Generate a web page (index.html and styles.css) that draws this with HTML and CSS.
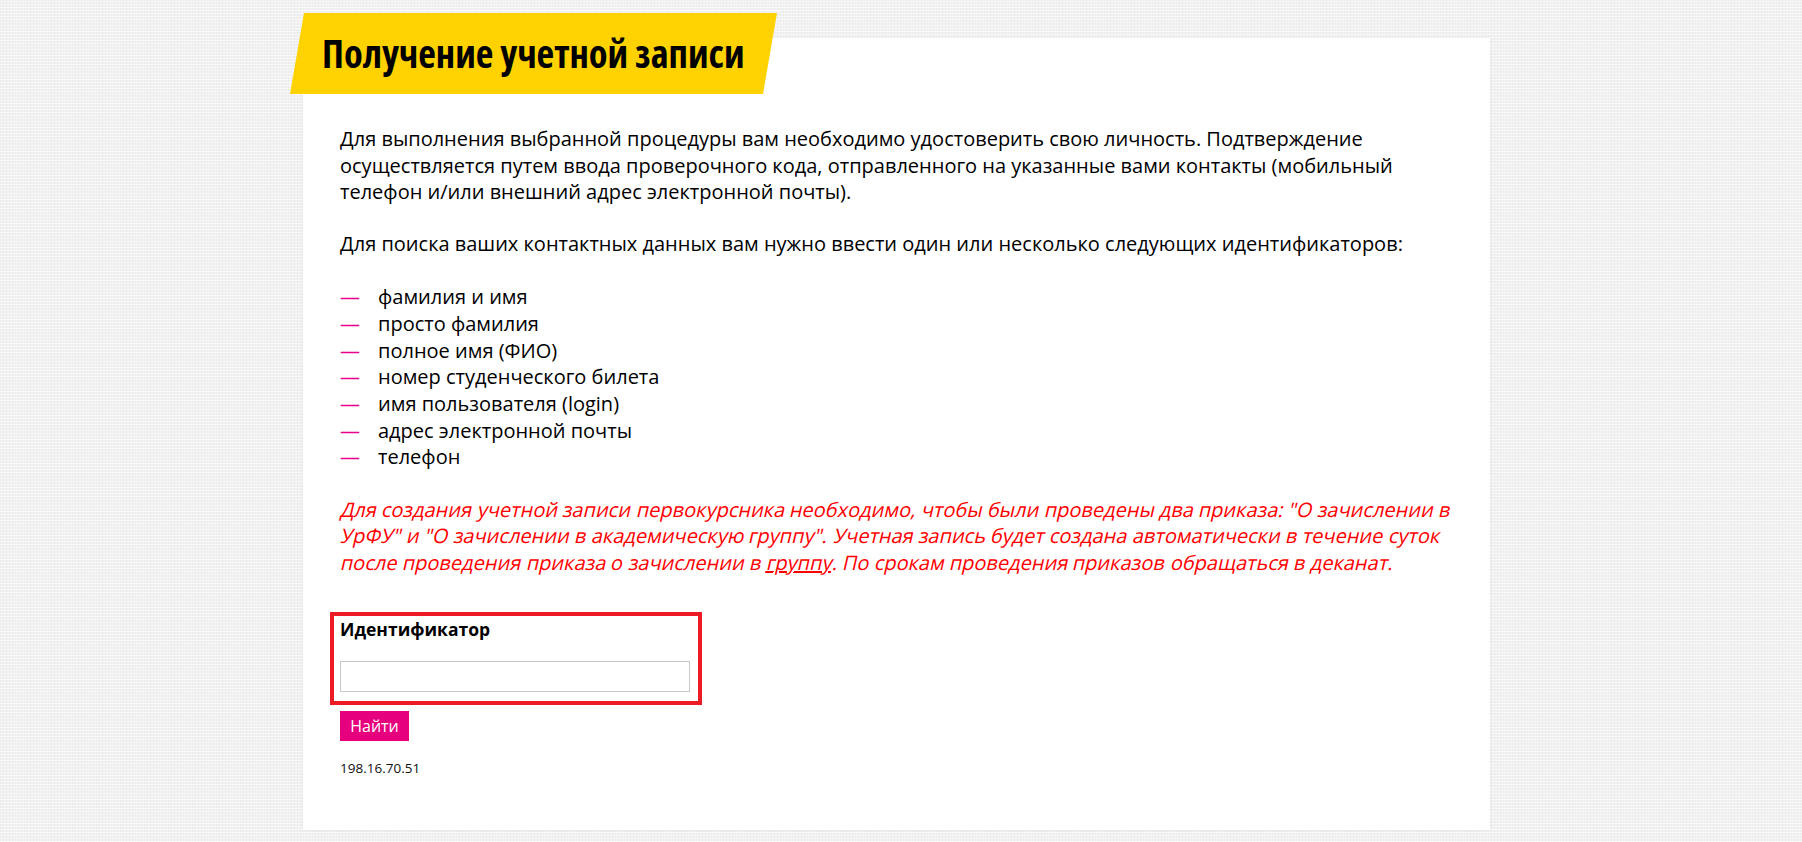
FILE: index.html
```html
<!DOCTYPE html>
<html lang="ru">
<head>
<meta charset="utf-8">
<title>Получение учетной записи</title>
<link rel="stylesheet" href="styles.css">
</head>
<body>
<div class="page">
  <div class="card">
    <div class="banner"><h1>Получение учетной записи</h1></div>
    <p class="intro">Для выполнения выбранной процедуры вам необходимо удостоверить свою личность. Подтверждение осуществляется путем ввода проверочного кода, отправленного на указанные вами контакты (мобильный телефон и/или внешний адрес электронной почты).</p>
    <p>Для поиска ваших контактных данных вам нужно ввести один или несколько следующих идентификаторов:</p>
    <ul class="ids">
      <li>фамилия и имя</li>
      <li>просто фамилия</li>
      <li>полное имя (ФИО)</li>
      <li>номер студенческого билета</li>
      <li>имя пользователя (login)</li>
      <li>адрес электронной почты</li>
      <li>телефон</li>
    </ul>
    <p class="warn"><span class="w">Для</span> <span class="w">создания</span> <span class="w">учетной</span> <span class="w">записи</span> <span class="w">первокурсника</span> <span class="w">необходимо,</span> <span class="w">чтобы</span> <span class="w">были</span> <span class="w">проведены</span> <span class="w">два</span> <span class="w">приказа:</span> <span class="w">"О</span> <span class="w">зачислении</span> <span class="w">в</span> <span class="w">УрФУ"</span> <span class="w">и</span> <span class="w">"О</span> <span class="w">зачислении</span> <span class="w">в</span> <span class="w">академическую</span> <span class="w">группу".</span> <span class="w">Учетная</span> <span class="w">запись</span> <span class="w">будет</span> <span class="w">создана</span> <span class="w">автоматически</span> <span class="w">в</span> <span class="w">течение</span> <span class="w">суток</span> <span class="w">после</span> <span class="w">проведения</span> <span class="w">приказа</span> <span class="w">о</span> <span class="w">зачислении</span> <span class="w">в</span> <span class="w"><u>группу</u>.</span> <span class="w">По</span> <span class="w">срокам</span> <span class="w">проведения</span> <span class="w">приказов</span> <span class="w">обращаться</span> <span class="w">в</span> <span class="w">деканат.</span></p>
    <form class="form">
      <div class="field">
        <label class="label" for="ident">Идентификатор</label>
        <input class="input" id="ident" type="text">
      </div>
      <button class="btn" type="button">Найти</button>
      <div class="ip">198.16.70.51</div>
    </form>
  </div>
</div>
</body>
</html>
```
FILE: styles.css
```css
html, body {
  margin: 0;
  padding: 0;
}
body {
  background-color: #f1f1f1;
  background-image:
    repeating-linear-gradient(0deg, rgba(255,255,255,0.55) 0 1px, transparent 1px 3px),
    repeating-linear-gradient(90deg, rgba(0,0,0,0.025) 0 1px, transparent 1px 3px);
  font-family: "Open Sans", "Noto Sans", sans-serif;
  color: #000;
  height: 842px;
  overflow: hidden;
}
.page {
  padding-top: 38px;
  margin-left: 303px;
  width: 1187px;
}
.card {
  position: relative;
  background: #fff;
  box-shadow: 0 0 3px rgba(0,0,0,0.07);
  padding: 88px 36px 0 37px;
  height: 704px;
  font-size: 20px;
  line-height: 26.67px;
}
.banner {
  position: absolute;
  left: -13px;
  top: -25px;
  width: 487px;
  height: 81px;
  background: #ffd200;
  clip-path: polygon(14px 0, 100% 0, calc(100% - 14px) 100%, 0 100%);
  display: flex;
  align-items: center;
  padding-left: 32px;
  box-sizing: border-box;
}
.banner h1 {
  margin: 0;
  font-family: "Open Sans", sans-serif;
  font-weight: 700;
  font-stretch: 75%;
  font-size: 38.5px;
  line-height: 1;
  color: #000;
}
p {
  margin: 0 0 26.67px 0;
}
.intro {
  margin-bottom: 25px;
}
.ids {
  list-style: none;
  margin: 0 0 25.5px 0;
  padding: 0;
}
.ids li::before {
  content: "—";
  color: #ec008c;
  display: inline-block;
  width: 38px;
}
.warn {
  color: #ff0000;
  margin-bottom: 35px;
}
.warn .w {
  display: inline-block;
  transform: skewX(-13deg);
  transform-origin: 50% 70%;
}
.warn u {
  text-decoration: underline;
}
.form {
  margin: 0;
}
.field {
  box-sizing: border-box;
  border: 4px solid #ed1c24;
  width: 372px;
  margin-left: -10px;
  padding: 0 9px 9px 6px;
}
.label {
  display: block;
  font-weight: 700;
  font-size: 17.5px;
  line-height: 27px;
  margin-bottom: 18px;
}
.input {
  display: block;
  box-sizing: border-box;
  width: 350px;
  height: 31px;
  border: 1px solid #c8c8c8;
  margin: 0;
  padding: 0 6px;
  font-family: inherit;
  font-size: 16px;
}
.btn {
  display: block;
  margin-top: 6px;
  width: 69px;
  height: 30px;
  background: #e6007e;
  color: #fff;
  border: 0;
  font-family: "Open Sans", sans-serif;
  font-size: 16px;
  padding: 0;
}
.ip {
  margin-top: 18px;
  font-size: 13.5px;
  line-height: 18px;
  color: #111;
}
```
